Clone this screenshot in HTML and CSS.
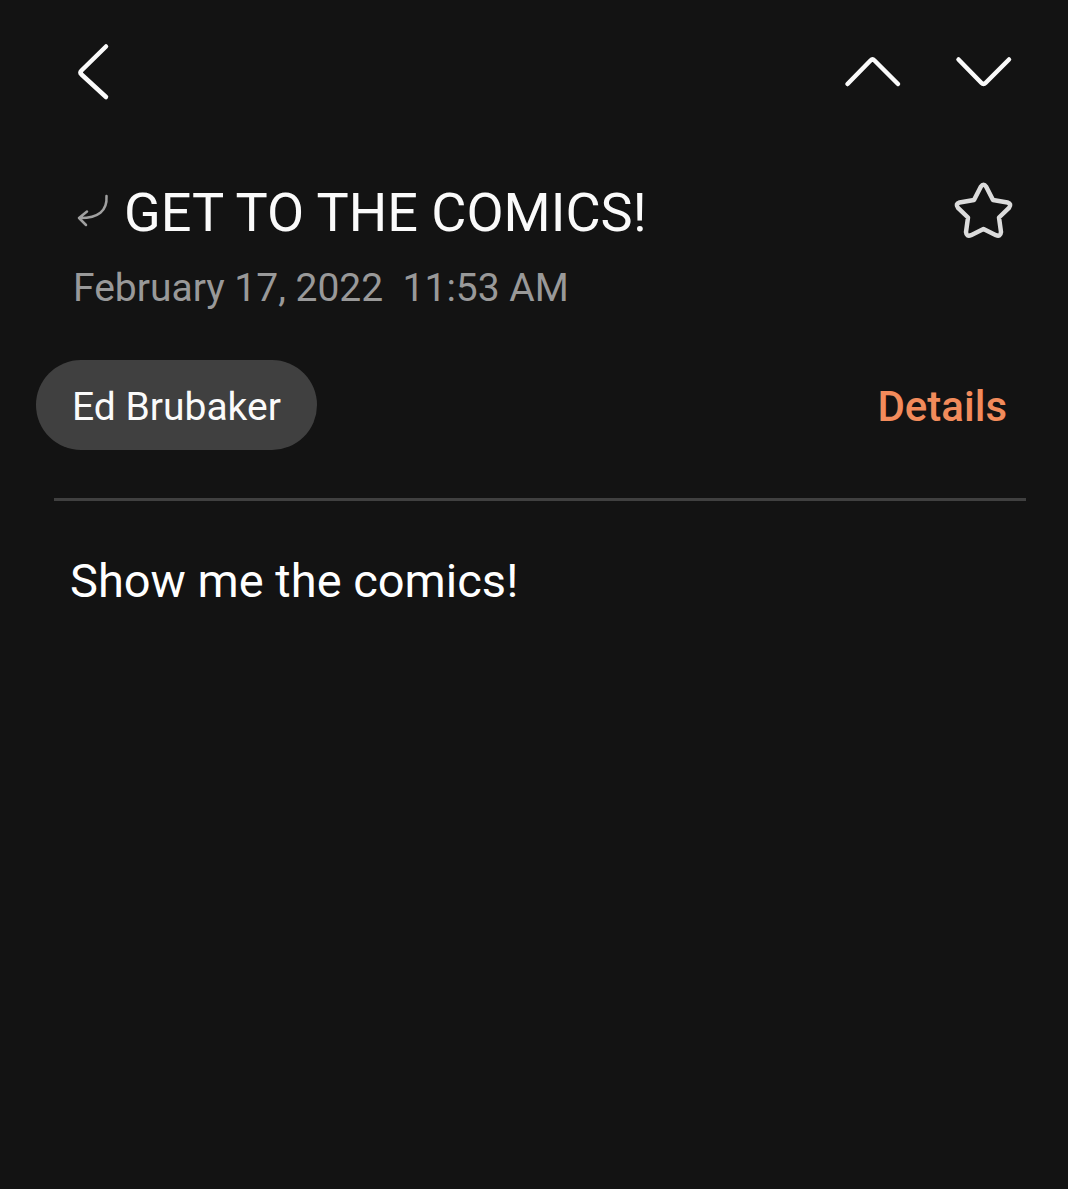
FILE: index.html
```html
<!DOCTYPE html>
<html lang="en">
<head>
    <meta charset="UTF-8">
    <meta name="viewport" content="width=device-width, initial-scale=1.0">
    <title>GET TO THE COMICS!</title>
    <link rel="stylesheet" href="styles.css">
</head>
<body>
    <!-- Top bar -->
    <nav class="toolbar">
        <button class="icon-btn back" type="button" aria-label="Back">
            <svg viewBox="0 0 60 60"><path d="M43 4.500 L18.500 28.500 Q16.500 30.500 18.500 32.500 L43 55"/></svg>
        </button>
        <button class="icon-btn" type="button" aria-label="Previous message">
            <svg viewBox="0 0 60 60"><path d="M4.500 42 L27.500 18.500 Q29.500 16.500 31.500 18.500 L55 42"/></svg>
        </button>
        <button class="icon-btn" type="button" aria-label="Next message">
            <svg viewBox="0 0 60 60"><path d="M4.500 17.500 L27.500 41 Q29.500 43 31.500 41 L55 17.500"/></svg>
        </button>
    </nav>

    <main>
        <header class="message-header">
            <div class="subject-row">
                <svg class="reply-icon" viewBox="0 0 36 36"><path d="M32.500 5 Q34 27.500 5 27 M13 20.500 L5 27 L12 34"/></svg>
                <h1>GET TO THE COMICS!</h1>
                <button class="icon-btn star" type="button" aria-label="Add star">
                    <svg viewBox="0 0 60 60"><path d="M26.800 5.800 Q29.500 1.800 32.200 5.800 L39 19 L53.500 21.500 Q58 22.800 55 26.800 L45 36.500 L47 51 Q46.500 56 42 54.200 L29.500 48 L17 54.200 Q12.500 56 12 51 L14 36.500 L4 26.800 Q1 22.800 5.500 21.500 L20 19 Z"/></svg>
                </button>
            </div>
            <p class="date">February 17, 2022&nbsp; 11:53 AM</p>
        </header>

        <div class="sender-row">
            <button class="chip" type="button">Ed Brubaker</button>
            <a href="#" class="details">Details</a>
        </div>

        <hr>

        <p class="message-body">Show me the comics!</p>
    </main>
</body>
</html>
```
FILE: styles.css
```css
* {
    margin: 0;
    padding: 0;
    box-sizing: border-box;
    font-family: Roboto, sans-serif;
}

body {
    min-height: 100vh;
    background: #131313;
    color: #fafafa;
}

button {
    background: none;
    border: none;
    color: inherit;
    cursor: pointer;
}

svg {
    display: block;
    fill: none;
    stroke: currentColor;
    stroke-linecap: round;
    stroke-linejoin: round;
}

/* Top bar */
.toolbar {
    display: flex;
    align-items: center;
    gap: 51px;
    padding: 42px 54px 42px 63px;
}

.icon-btn {
    flex: none;
    width: 60px;
    height: 60px;
}

.icon-btn svg {
    width: 60px;
    height: 60px;
    stroke-width: 4.5;
}

.back {
    margin-right: auto;
}

/* Subject and date */
.message-header {
    padding: 37px 54px 0 73px;
}

.subject-row {
    display: flex;
    align-items: flex-start;
}

.reply-icon {
    flex: none;
    width: 36px;
    height: 36px;
    margin: 10px 14px 0 1px;
    color: #a0a0a0;
    stroke-width: 2.5;
}

h1 {
    flex: 1;
    font-size: 54px;
    font-weight: 400;
    line-height: 64px;
}

.star {
    color: #dcdcdc;
}

.date {
    margin-top: 20px;
    color: #999;
    font-size: 39px;
    line-height: 46px;
}

/* Sender */
.sender-row {
    display: flex;
    align-items: center;
    justify-content: space-between;
    padding: 49px 61px 48px 36px;
}

.chip {
    padding: 24px 36px 20px;
    border-radius: 45px;
    background: #404040;
    font-size: 39px;
    line-height: 46px;
}

.details {
    padding-top: 2px;
    color: #f28b5b;
    font-size: 42px;
    font-weight: 500;
    text-decoration: none;
}

hr {
    height: 3px;
    margin: 0 42px 0 54px;
    border: none;
    background: #404040;
}

.message-body {
    padding: 52px 70px;
    color: #fff;
    font-size: 47px;
    line-height: 55px;
}
```
